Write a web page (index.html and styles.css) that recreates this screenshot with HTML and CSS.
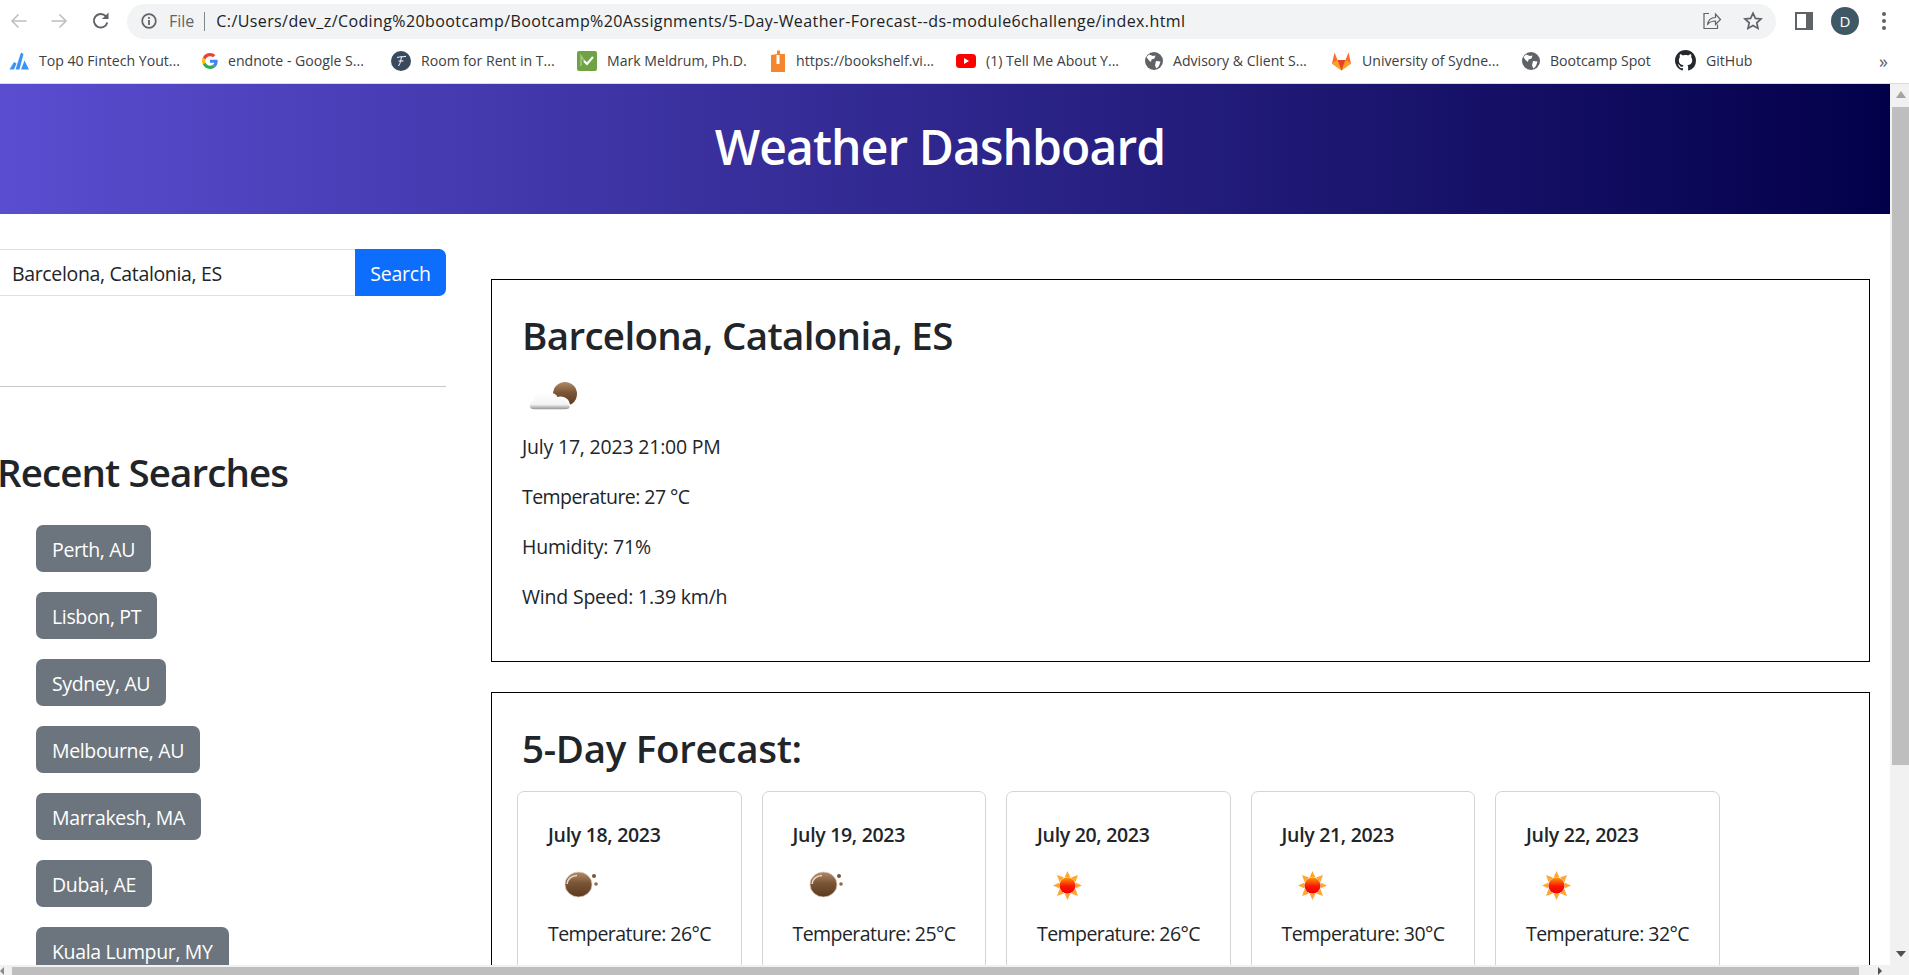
FILE: index.html
```html
<!DOCTYPE html>
<html lang="en">
<head>
    <meta charset="UTF-8">
    <title>Weather Dashboard</title>
    <link rel="stylesheet" href="styles.css">
</head>
<body>

    <svg class="defs" width="0" height="0" aria-hidden="true">
        <defs>
            <linearGradient id="moonFill" x1="0" y1="0" x2="0" y2="1">
                <stop offset="0" stop-color="#b08a68"/>
                <stop offset="0.45" stop-color="#7a5535"/>
                <stop offset="1" stop-color="#5a3a20"/>
            </linearGradient>
            <linearGradient id="cloudFill" x1="0" y1="0" x2="0" y2="1">
                <stop offset="0" stop-color="#ffffff"/>
                <stop offset="0.7" stop-color="#f4f4f4"/>
                <stop offset="1" stop-color="#868686"/>
            </linearGradient>
            <linearGradient id="sunFill" x1="0" y1="0" x2="0" y2="1">
                <stop offset="0" stop-color="#ff9a00"/>
                <stop offset="0.55" stop-color="#fb1500"/>
                <stop offset="1" stop-color="#f00000"/>
            </linearGradient>
            <symbol id="moon" viewBox="0 0 61 61">
                <ellipse cx="30.500" cy="29.500" rx="13.500" ry="12.500" fill="url(#moonFill)" stroke="#dccabb" stroke-width="0.800"/>
                <path d="M19 29c.5-5 4.500-8.500 10-8.500" fill="none" stroke="#ecdccd" stroke-width="1.500"/>
                <circle cx="46" cy="21" r="2" fill="#76533a"/>
                <circle cx="48" cy="29" r="1.800" fill="#8b6a50"/>
            </symbol>
            <symbol id="sun" viewBox="0 0 61 61">
                <path d="M30.500 16l3 6.500h-6zM30.500 45l-3-6.500h6zM16 30.500l6.500-3v6zM45 30.500l-6.500 3v-6zM20 20l7 2.500-4.500 4.500zM41 20l-2.500 7-4.500-4.500zM20 41l2.500-7 4.500 4.500zM41 41l-7-2.500 4.500-4.500z" fill="#ffa733"/>
                <circle cx="30.500" cy="30.500" r="8" fill="url(#sunFill)"/>
            </symbol>
            <symbol id="globe" viewBox="0 0 18 18">
                <circle cx="9" cy="9" r="9" fill="#5f6368"/>
                <path d="M4 2.500l4 1.500 2.500-.5-1 3-3 1-.5 2.500-2.500-2-2-3zM11 9l4.500.5L14 14l-2.500 2.500-1.500-3z" fill="#fff"/>
            </symbol>
        </defs>
    </svg>

    <div class="browser-bar">
        <div class="nav-row">
            <svg class="nav-icon back" width="18" height="18" viewBox="0 0 18 18"><path d="M16.500 9H2.500M8.500 2.500L2 9l6.500 6.500" fill="none" stroke="#bcc0c4" stroke-width="1.600"/></svg>
            <svg class="nav-icon forward" width="18" height="18" viewBox="0 0 18 18"><path d="M1.500 9h14M9.500 2.500L16 9l-6.500 6.500" fill="none" stroke="#bcc0c4" stroke-width="1.600"/></svg>
            <svg class="nav-icon reload" width="20" height="20" viewBox="0 0 20 20"><path d="M16.300 11.500a6.800 6.800 0 1 1-1.500-6.300" fill="none" stroke="#5f6368" stroke-width="1.900"/><path d="M17.500 1.500v6.500h-6.500z" fill="#5f6368"/></svg>
            <div class="address-bar">
                <svg class="info-icon" width="16" height="16" viewBox="0 0 16 16"><circle cx="8" cy="8" r="6.800" fill="none" stroke="#5f6368" stroke-width="1.700"/><rect x="7.100" y="7" width="1.800" height="5" fill="#5f6368"/><rect x="7.100" y="4" width="1.800" height="1.800" fill="#5f6368"/></svg>
                <span class="file-label">File</span>
                <span class="address-sep"></span>
                <span class="url">C:/Users/dev_z/Coding%20bootcamp/Bootcamp%20Assignments/5-Day-Weather-Forecast--ds-module6challenge/index.html</span>
                <svg class="share-icon" width="20" height="20" viewBox="0 0 20 20"><path d="M7 2.500H2v15h13.500v-4" fill="none" stroke="#5f6368" stroke-width="1.200"/><path d="M5.500 14c.5-4.500 3.500-7.500 8-7.500V3l5 5.500-5 5v-3.500c-3 0-6 1-8 3.500z" fill="none" stroke="#5f6368" stroke-width="1.200"/></svg>
                <svg class="star-icon" width="20" height="20" viewBox="0 0 20 20"><path d="M10 2.200l2.400 5.200 5.600.6-4.200 3.800 1.200 5.600-5-2.900-5 2.900 1.200-5.600L2 8l5.600-.6z" fill="none" stroke="#5f6368" stroke-width="1.700"/></svg>
            </div>
            <svg class="panel-icon" width="18" height="18" viewBox="0 0 18 18"><rect x="1" y="1" width="16" height="16" fill="none" stroke="#5f6368" stroke-width="2"/><rect x="11" y="1" width="6" height="16" fill="#5f6368"/></svg>
            <span class="avatar">D</span>
            <span class="kebab"><i></i><i></i><i></i></span>
        </div>
        <div class="bookmarks">
            <a class="bookmark">
                <svg width="20" height="20" viewBox="0 0 20 20"><path d="M0.500 18.500L5 11l2.500 1.500-2.500 6zM6.500 18.500L12 1.500l2.500 1.500-4 15.500zM12 18.500l3.500-9 4.500 9z" fill="#3b93f5"/></svg>
                <span>Top 40 Fintech Yout...</span>
            </a>
            <a class="bookmark">
                <svg width="16" height="16" viewBox="0 0 48 48">
                    <path fill="#EA4335" d="M24 9.500c3.540 0 6.710 1.220 9.210 3.600l6.850-6.850C35.900 2.380 30.470 0 24 0 14.620 0 6.510 5.380 2.560 13.220l7.980 6.190C12.430 13.720 17.740 9.500 24 9.500z"/>
                    <path fill="#4285F4" d="M46.980 24.550c0-1.570-.15-3.090-.38-4.550H24v9.020h12.940c-.58 2.960-2.260 5.480-4.780 7.180l7.730 6c4.510-4.180 7.090-10.360 7.090-17.650z"/>
                    <path fill="#FBBC05" d="M10.530 28.590c-.48-1.450-.76-2.990-.76-4.590s.27-3.140.76-4.590l-7.980-6.190C.92 16.460 0 20.120 0 24c0 3.880.92 7.540 2.560 10.780l7.970-6.190z"/>
                    <path fill="#34A853" d="M24 48c6.480 0 11.930-2.130 16.030-5.810l-7.730-6c-2.150 1.450-4.920 2.300-8.300 2.300-6.260 0-11.570-4.220-13.470-9.910l-7.980 6.190C6.510 42.620 14.620 48 24 48z"/>
                </svg>
                <span>endnote - Google S...</span>
            </a>
            <a class="bookmark">
                <svg width="20" height="20" viewBox="0 0 20 20"><circle cx="10" cy="10" r="10" fill="#3a4a5e"/><path d="M6 6.500c3-1 6-.5 9-1.200M10.500 5.500C10 9 9.500 12 7.500 15M7.500 10h5" fill="none" stroke="#fff" stroke-width="1"/></svg>
                <span>Room for Rent in T...</span>
            </a>
            <a class="bookmark">
                <svg width="20" height="20" viewBox="0 0 20 20"><rect width="20" height="20" rx="2" fill="#6ea244"/><path d="M4 15V5l5.500 8" fill="none" stroke="#a6c78a" stroke-width="1.500"/><path d="M7 10l3 3 6-7" fill="none" stroke="#fff" stroke-width="2.200"/></svg>
                <span>Mark Meldrum, Ph.D.</span>
            </a>
            <a class="bookmark">
                <svg width="16" height="22" viewBox="0 0 16 22"><path d="M1 5l6-1V0.500h3V4h5v18H1z" fill="#f5862e"/><rect x="6.500" y="5" width="3" height="9" fill="#fff"/></svg>
                <span>https://bookshelf.vi...</span>
            </a>
            <a class="bookmark">
                <svg width="20" height="14" viewBox="0 0 20 14"><rect width="20" height="14" rx="3.500" fill="#f00"/><path d="M8 4l5 3-5 3z" fill="#fff"/></svg>
                <span>(1) Tell Me About Y...</span>
            </a>
            <a class="bookmark">
                <svg width="18" height="18"><use href="#globe"/></svg>
                <span>Advisory &amp; Client S...</span>
            </a>
            <a class="bookmark">
                <svg width="21" height="20" viewBox="0 0 21 20"><path d="M10.500 19.500L1 12.500l2.500-11 3 7.500h8l3-7.500 2.500 11z" fill="#fc6d26"/><path d="M10.500 19.500L6.500 9h8z" fill="#e24329"/><path d="M10.500 19.500L1 12.500 6.500 9zM10.500 19.500L20 12.500 14.500 9z" fill="#fca326"/></svg>
                <span>University of Sydne...</span>
            </a>
            <a class="bookmark">
                <svg width="18" height="18"><use href="#globe"/></svg>
                <span>Bootcamp Spot</span>
            </a>
            <a class="bookmark">
                <svg width="21" height="21" viewBox="0 0 16 16"><path fill="#24292f" d="M8 0C3.580 0 0 3.580 0 8c0 3.540 2.290 6.530 5.470 7.590.4.070.55-.17.550-.38 0-.19-.01-.82-.01-1.490-2.010.37-2.530-.49-2.690-.94-.09-.23-.48-.94-.82-1.130-.28-.15-.68-.52-.01-.53.630-.01 1.080.58 1.230.82.720 1.210 1.870.87 2.330.66.070-.52.280-.87.510-1.070-1.780-.2-3.640-.89-3.640-3.950 0-.87.310-1.590.82-2.150-.08-.2-.36-1.020.08-2.120 0 0 .67-.21 2.200.82.640-.18 1.320-.27 2-.27.680 0 1.360.09 2 .27 1.530-1.040 2.200-.82 2.200-.82.440 1.100.160 1.920.080 2.120.51.560.82 1.270.82 2.150 0 3.070-1.870 3.750-3.650 3.950.29.250.54.730.54 1.480 0 1.070-.01 1.930-.01 2.200 0 .21.150.46.550.38A8.013 8.013 0 0 0 16 8c0-4.420-3.580-8-8-8z"/></svg>
                <span>GitHub</span>
            </a>
            <span class="more">»</span>
        </div>
    </div>

    <div class="viewport">
        <div class="page-area">
            <div class="page">
                <header class="page-header">
                    <h1>Weather Dashboard</h1>
                </header>

                <div class="dashboard">
                    <aside class="sidebar">
                        <div class="search-group">
                            <input class="search-input" type="text" value="Barcelona, Catalonia, ES">
                            <button class="search-btn">Search</button>
                        </div>
                        <hr class="divider">
                        <h2 class="recent-title">Recent Searches</h2>
                        <ul class="recent-list">
                            <li><button class="recent-btn">Perth, AU</button></li>
                            <li><button class="recent-btn">Lisbon, PT</button></li>
                            <li><button class="recent-btn">Sydney, AU</button></li>
                            <li><button class="recent-btn">Melbourne, AU</button></li>
                            <li><button class="recent-btn">Marrakesh, MA</button></li>
                            <li><button class="recent-btn">Dubai, AE</button></li>
                            <li><button class="recent-btn">Kuala Lumpur, MY</button></li>
                        </ul>
                    </aside>

                    <main class="results">
                        <section class="panel current">
                            <h2>Barcelona, Catalonia, ES</h2>
                            <svg class="weather-icon" width="61" height="61" viewBox="0 0 61 61">
                                <circle cx="43" cy="29" r="12" fill="url(#moonFill)"/>
                                <path d="M12 45C6 45 5 37 11 35 12 27 22 23 27 29 31 28 34 30 35 33 39 31 46 33 47 39 50 42 48 45 44 45Z" fill="url(#cloudFill)" stroke="#fff" stroke-width="1.500"/>
                            </svg>
                            <p>July 17, 2023 21:00 PM</p>
                            <p class="temp">Temperature: 27 °C</p>
                            <p>Humidity: 71%</p>
                            <p>Wind Speed: 1.39 km/h</p>
                        </section>

                        <section class="panel forecast">
                            <h2>5-Day Forecast:</h2>
                            <div class="forecast-row">
                                <div class="day-card">
                                    <h5>July 18, 2023</h5>
                                    <svg class="weather-icon" width="61" height="61"><use href="#moon"/></svg>
                                    <p class="temp">Temperature: 26°C</p>
                                </div>
                                <div class="day-card">
                                    <h5>July 19, 2023</h5>
                                    <svg class="weather-icon" width="61" height="61"><use href="#moon"/></svg>
                                    <p class="temp">Temperature: 25°C</p>
                                </div>
                                <div class="day-card">
                                    <h5>July 20, 2023</h5>
                                    <svg class="weather-icon" width="61" height="61"><use href="#sun"/></svg>
                                    <p class="temp">Temperature: 26°C</p>
                                </div>
                                <div class="day-card">
                                    <h5>July 21, 2023</h5>
                                    <svg class="weather-icon" width="61" height="61"><use href="#sun"/></svg>
                                    <p class="temp">Temperature: 30°C</p>
                                </div>
                                <div class="day-card">
                                    <h5>July 22, 2023</h5>
                                    <svg class="weather-icon" width="61" height="61"><use href="#sun"/></svg>
                                    <p class="temp">Temperature: 32°C</p>
                                </div>
                            </div>
                        </section>
                    </main>
                </div>
            </div>

            <div class="v-scrollbar">
                <span class="arrow-up"></span>
                <span class="v-thumb"></span>
                <span class="arrow-down"></span>
            </div>
        </div>

        <div class="h-scrollbar">
            <span class="arrow-left"></span>
            <span class="h-thumb"></span>
            <span class="arrow-right"></span>
        </div>
    </div>

</body>
</html>
```

FILE: styles.css
```css
/* Page frame: browser bar on top, scrolled page below */
html, body {
    height: 100%;
    margin: 0;
}
body {
    display: flex;
    flex-direction: column;
    overflow: hidden;
    font-family: "Open Sans", "Noto Sans", sans-serif;
    font-size: 19.5px;
    letter-spacing: -0.2px;
    color: #212529;
    background: #fff;
}
.defs { display: block; height: 0; }

/* --- Browser bar --- */
.browser-bar {
    flex: none;
    height: 84px;
    box-sizing: border-box;
    border-bottom: 1px solid #dadce0;
    background: #fff;
    letter-spacing: 0;
}
.nav-row {
    display: flex;
    align-items: center;
    height: 41px;
    padding-top: 1px;
    box-sizing: border-box;
}
.nav-icon { flex: none; }
.back { margin-left: 10px; }
.forward { margin-left: 22px; }
.reload { margin-left: 23px; }
.address-bar {
    display: flex;
    align-items: center;
    flex: none;
    width: 1649px;
    height: 35px;
    margin-left: 16px;
    box-sizing: border-box;
    padding: 0 13px 0 14px;
    border-radius: 18px;
    background: #f1f3f4;
    font-size: 16px;
}
.info-icon { flex: none; }
.file-label { margin-left: 12px; color: #5f6368; }
.address-sep {
    width: 1px;
    height: 19px;
    margin: 0 11px 0 10px;
    background: #80868b;
}
.url {
    flex: 1;
    color: #202124;
    letter-spacing: 0.4px;
    white-space: nowrap;
}
.share-icon { flex: none; }
.star-icon { flex: none; margin-left: 21px; }
.panel-icon { flex: none; margin-left: 19px; }
.avatar {
    flex: none;
    width: 28px;
    height: 28px;
    margin-left: 18px;
    border-radius: 50%;
    background: #3f5866;
    color: #fff;
    font-size: 15px;
    line-height: 28px;
    text-align: center;
}
.kebab {
    display: flex;
    flex-direction: column;
    gap: 3px;
    margin-left: 23px;
}
.kebab i {
    width: 4px;
    height: 4px;
    border-radius: 50%;
    background: #5f6368;
}
.bookmarks {
    display: grid;
    grid-template-columns: 193px 189px 186px 193px 186px 189px 186px 191px 153px 1fr auto;
    align-items: center;
    height: 39px;
    padding-left: 9px;
    box-sizing: border-box;
    font-size: 14.100px;
    color: #3c4043;
}
.bookmark {
    display: flex;
    align-items: center;
    gap: 10px;
    white-space: nowrap;
}
.more {
    margin-right: 21px;
    font-size: 18px;
    color: #5f6368;
}

/* --- Scrolled page --- */
.viewport {
    flex: 1;
    display: flex;
    flex-direction: column;
    min-height: 0;
}
.page-area {
    flex: 1;
    display: flex;
    min-height: 0;
}
.page {
    flex: 1;
    min-width: 0;
    overflow: hidden;
}
.page-header {
    height: 130px;
    box-sizing: border-box;
    display: flex;
    align-items: center;
    justify-content: center;
    padding: 0 10px 6px 0;
    background: linear-gradient(90deg, #5a4dd0 0%, #03004a 100%);
}
.page-header h1 {
    margin: 0;
    color: #fff;
    font-size: 48px;
    font-weight: 600;
    letter-spacing: -0.9px;
}

.dashboard {
    display: flex;
    padding-right: 20px;
}

/* --- Sidebar --- */
.sidebar {
    flex: none;
    width: 446px;
    margin-right: 45px;
}
.search-group {
    display: flex;
    height: 47px;
    margin: 35px 0 0 -20px;
}
.search-input {
    flex: 1;
    min-width: 0;
    box-sizing: border-box;
    padding: 2px 12px 0 31px;
    border: 1px solid #dee2e6;
    border-right: 0;
    border-radius: 7px 0 0 7px;
    font: inherit;
    letter-spacing: -0.35px;
    color: #212529;
}
.search-btn {
    flex: none;
    width: 91px;
    padding: 2px 0 0;
    border: none;
    border-radius: 0 7px 7px 0;
    background: #0d6efd;
    color: #fff;
    font: inherit;
    letter-spacing: inherit;
}
.divider {
    height: 1px;
    margin: 90px 0 0;
    border: 0;
    background: #c8c8c8;
}
.recent-title {
    margin: 62px 0 0 -3px;
    font-size: 38.500px;
    font-weight: 600;
    letter-spacing: -0.9px;
    line-height: 47px;
    white-space: nowrap;
}
.recent-list {
    margin: 29px 0 0;
    padding: 0 0 0 36px;
    list-style: none;
}
.recent-list li { margin-bottom: 20px; }
.recent-btn {
    display: block;
    height: 47px;
    padding: 2px 16px 0;
    border: none;
    border-radius: 7px;
    background: #6c757d;
    color: #fff;
    font: inherit;
    letter-spacing: -0.35px;
    white-space: nowrap;
}

/* --- Results --- */
.results {
    flex: 1;
    min-width: 0;
    padding-top: 65px;
}
.panel {
    box-sizing: border-box;
    padding: 32px 30px 30px;
    border: 1px solid #000;
}
.panel h2 {
    margin: 0;
    font-size: 38.500px;
    font-weight: 600;
    letter-spacing: -0.65px;
    line-height: 47px;
}
.panel p {
    margin: 0 0 20px;
    line-height: 30px;
    white-space: nowrap;
}
.panel .temp { letter-spacing: -0.55px; }
.weather-icon { display: block; }
.current { height: 383px; }
.current .weather-icon { margin: 6px 0 6px; }
.forecast { margin-top: 30px; }
.forecast h2 { letter-spacing: -0.3px; }
.forecast-row {
    display: flex;
    gap: 20px;
    margin: 19px 0 0 -5px;
}
.day-card {
    flex: none;
    box-sizing: border-box;
    width: 224.500px;
    padding: 28px 30px 10px;
    border: 1px solid #d4d4d4;
    border-radius: 7px;
}
.day-card h5 {
    margin: 0 0 5px;
    font-size: 19.500px;
    font-weight: 600;
    letter-spacing: -0.3px;
    line-height: 30px;
}
.day-card .weather-icon { margin-bottom: 3px; }

/* --- Scrollbars --- */
.v-scrollbar {
    flex: none;
    width: 19px;
    display: flex;
    flex-direction: column;
    align-items: flex-end;
    background: #f1f1f1;
}
.arrow-up {
    margin: 7px 3px 0 0;
    border: 5px solid transparent;
    border-top: 0;
    border-bottom: 7px solid #a3a3a3;
}
.v-thumb {
    width: 17px;
    height: 658px;
    margin-top: 9px;
    background: #bebebe;
}
.arrow-down {
    margin: auto 3px 8px 0;
    border: 5px solid transparent;
    border-bottom: 0;
    border-top: 6px solid #505050;
}
.h-scrollbar {
    flex: none;
    display: flex;
    align-items: flex-end;
    height: 10px;
    background: #f1f1f1;
}
.arrow-left {
    width: 0;
    margin: 0 8px 0 0;
    border: 4px solid transparent;
    border-left: 0;
    border-right: 4px solid #8a8a8a;
}
.h-thumb {
    width: 1847px;
    height: 8px;
    background: #bebebe;
}
.arrow-right {
    margin-left: 19px;
    border: 4px solid transparent;
    border-right: 0;
    border-left: 4px solid #505050;
}
```
